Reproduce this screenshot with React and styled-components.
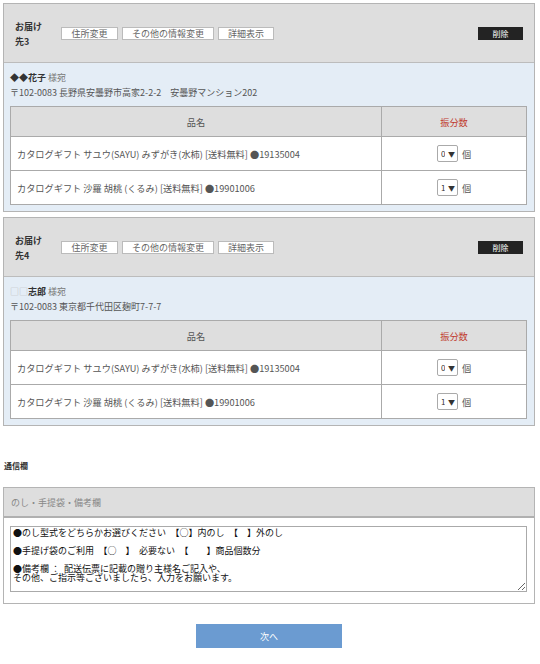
import React from 'react'
import styled, { createGlobalStyle } from 'styled-components'

const GlobalStyle = createGlobalStyle`
  body {
    margin: 0;
    background: #fff;
    font-family: "Noto Sans CJK JP", "Noto Sans", sans-serif;
    color: #555;
  }
`

const Page = styled.div`
  width: 540px;
  padding: 3px 5px 16px 3px;
  box-sizing: border-box;
`

const Card = styled.section`
  border: 1px solid #b4b4b4;
  margin-bottom: 5px;
`

const CardHeader = styled.div`
  display: flex;
  align-items: center;
  height: 58px;
  padding: 0 11px 0 11px;
  background: #dedede;
  border-bottom: 1px solid #bcbcbc;
`

const DestLabel = styled.div`
  width: 46px;
  font-size: 9px;
  font-weight: bold;
  line-height: 15px;
  color: #333;
  padding-top: 2px;
`

const Tools = styled.div`
  display: flex;
  gap: 4px;
  flex: 1;
`

const ToolButton = styled.button`
  width: ${p => p.w}px;
  height: 13px;
  padding: 0;
  border: 1px solid #bbb;
  background: #fff;
  color: #666;
  font-family: inherit;
  font-size: 9px;
  line-height: 11px;
`

const DeleteButton = styled.button`
  width: 45px;
  height: 13px;
  padding: 0;
  border: none;
  background: #232323;
  color: #fff;
  font-family: inherit;
  font-size: 8px;
  line-height: 13px;
`

const CardBody = styled.div`
  background: #e4edf6;
  padding: 8px 7px 6px 6px;
`

const NameLine = styled.div`
  font-size: 9px;
  line-height: 14px;
  color: #777;
  b {
    color: #333;
  }
`

const Tofu = styled.span`
  color: #bbb;
`

const Address = styled.div`
  font-size: 9px;
  line-height: 15px;
  color: #555;
  margin-bottom: 6px;
`

const Table = styled.table`
  width: 100%;
  border-collapse: collapse;
  background: #fff;
  font-size: 9.2px;
  th, td {
    border: 1px solid #aaa;
  }
  th {
    background: #dedede;
    font-weight: normal;
    height: 29px;
    padding: 0;
  }
  td {
    height: 33px;
    padding: 0 6px;
  }
`

const QtyHead = styled.th`
  width: 144px;
  color: #c0392b;
`

const QtyCell = styled.td`
  text-align: center;
`

const QtyWrap = styled.div`
  display: inline-flex;
  align-items: center;
  gap: 4px;
`

const FakeSelect = styled.div`
  display: inline-flex;
  align-items: center;
  justify-content: space-between;
  box-sizing: border-box;
  width: 21px;
  height: 17px;
  padding: 0 2px 0 3px;
  border: 1px solid #aaa;
  border-radius: 2px;
  background: #fff;
  color: #333;
  font-size: 8px;
  span {
    display: inline-block;
    width: ${p => (p.clip ? '4px' : 'auto')};
    overflow: hidden;
  }
  i {
    font-style: normal;
    font-size: 7px;
  }
`

const NoteTitle = styled.h3`
  margin: 34px 0 15px 1px;
  font-size: 8px;
  font-weight: bold;
  color: #333;
  line-height: 12px;
`

const NoteBox = styled.div`
  border: 1px solid #b4b4b4;
`

const NoteHeader = styled.div`
  height: 28px;
  display: flex;
  align-items: center;
  padding-left: 7px;
  background: #dedede;
  border-bottom: 2px solid #b0b0b0;
  font-size: 9px;
  color: #888;
`

const NoteBody = styled.div`
  padding: 8px 7px 11px 6px;
`

const NoteArea = styled.textarea`
  display: block;
  width: 100%;
  height: 66px;
  box-sizing: border-box;
  border: 1px solid #aaa;
  padding: 1px 2px;
  font-family: "Noto Sans CJK JP", sans-serif;
  font-size: 9px;
  line-height: 9px;
  color: #111;
  resize: vertical;
  overflow: hidden;
`

const Footer = styled.div`
  display: flex;
  justify-content: center;
  padding-top: 20px;
`

const NextButton = styled.button`
  width: 146px;
  height: 24px;
  border: none;
  background: #6b9bd1;
  color: #fff;
  font-family: inherit;
  font-size: 9px;
`

const items = [
  { name: 'カタログギフト サユウ(SAYU) みずがき(水柿) [送料無料] ●19135004', qty: '0', clip: true },
  { name: 'カタログギフト 沙羅 胡桃 (くるみ) [送料無料] ●19901006', qty: '1' },
]

const destinations = [
  { no: 3, name: <b>◆◆花子</b>, address: '〒102-0083 長野県安曇野市高家2-2-2　安曇野マンション202' },
  { no: 4, name: <><Tofu>□□</Tofu><b>志郎</b></>, address: '〒102-0083 東京都千代田区麹町7-7-7' },
]

const noteText =
  '●のし型式をどちらかお選びください　【○】内のし　【　】外のし\n\n' +
  '●手提げ袋のご利用　【○　】　必要ない　【　　】商品個数分\n\n' +
  '●備考欄 ：  配送伝票に記載の贈り主様名ご記入や、\nその他、ご指示等ございましたら、入力をお願います。'

function Destination({ dest }) {
  return (
    <Card>
      <CardHeader>
        <DestLabel>お届け<br />先{dest.no}</DestLabel>
        <Tools>
          <ToolButton w={57}>住所変更</ToolButton>
          <ToolButton w={92}>その他の情報変更</ToolButton>
          <ToolButton w={56}>詳細表示</ToolButton>
        </Tools>
        <DeleteButton>削除</DeleteButton>
      </CardHeader>
      <CardBody>
        <NameLine>{dest.name} 様宛</NameLine>
        <Address>{dest.address}</Address>
        <Table>
          <thead>
            <tr>
              <th>品名</th>
              <QtyHead>振分数</QtyHead>
            </tr>
          </thead>
          <tbody>
            {items.map((item, i) => (
              <tr key={i}>
                <td>{item.name}</td>
                <QtyCell>
                  <QtyWrap>
                    <FakeSelect clip={item.clip}>
                      <span>{item.qty}</span>
                      <i>▼</i>
                    </FakeSelect>
                    個
                  </QtyWrap>
                </QtyCell>
              </tr>
            ))}
          </tbody>
        </Table>
      </CardBody>
    </Card>
  )
}

export default function App() {
  return (
    <Page>
      <GlobalStyle />
      {destinations.map(d => (
        <Destination key={d.no} dest={d} />
      ))}
      <NoteTitle>通信欄</NoteTitle>
      <NoteBox>
        <NoteHeader>のし・手提袋・備考欄</NoteHeader>
        <NoteBody>
          <NoteArea defaultValue={noteText} />
        </NoteBody>
      </NoteBox>
      <Footer>
        <NextButton>次へ</NextButton>
      </Footer>
    </Page>
  )
}
